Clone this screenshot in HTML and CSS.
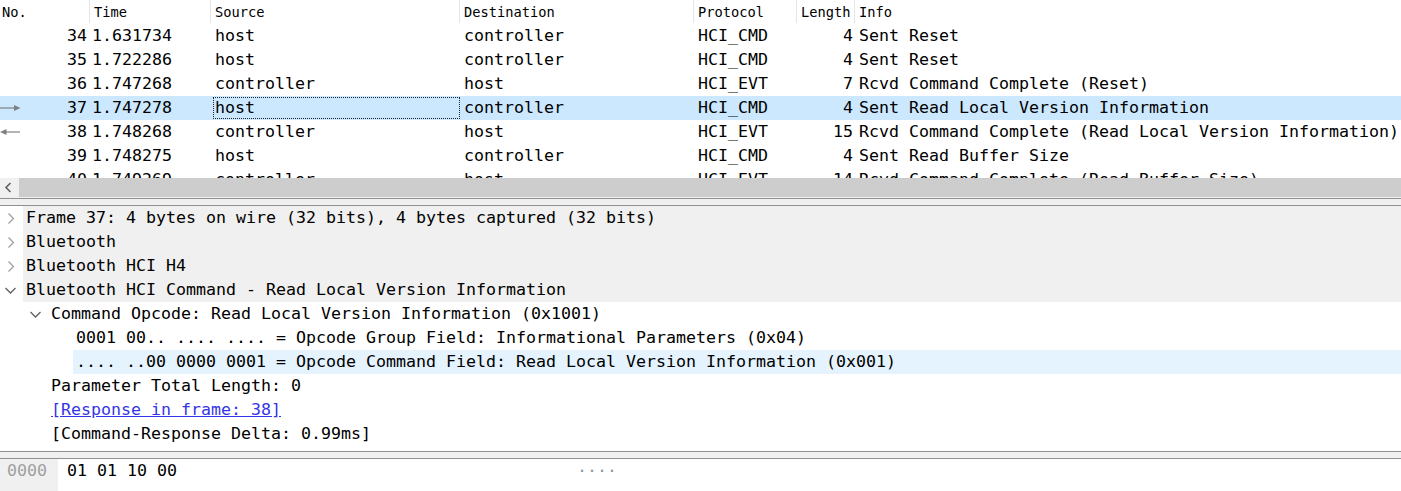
FILE: index.html
```html
<!DOCTYPE html>
<html>
<head>
<meta charset="utf-8">
<link rel="stylesheet" href="styles.css">
</head>
<body>
<div class="app">
  <div class="plist">
    <div class="phead">
      <span class="hcell h-no">No.</span>
      <span class="hcell">Time</span>
      <span class="hcell">Source</span>
      <span class="hcell">Destination</span>
      <span class="hcell">Protocol</span>
      <span class="hcell">Length</span>
      <span class="hcell last">Info</span>
    </div>
    <div class="prow">
      <span class="c-no">34</span><span class="c-time">1.631734</span><span class="c-txt">host</span><span class="c-txt">controller</span><span class="c-txt">HCI_CMD</span><span class="c-len">4</span><span class="c-txt">Sent Reset</span>
    </div>
    <div class="prow">
      <span class="c-no">35</span><span class="c-time">1.722286</span><span class="c-txt">host</span><span class="c-txt">controller</span><span class="c-txt">HCI_CMD</span><span class="c-len">4</span><span class="c-txt">Sent Reset</span>
    </div>
    <div class="prow">
      <span class="c-no">36</span><span class="c-time">1.747268</span><span class="c-txt">controller</span><span class="c-txt">host</span><span class="c-txt">HCI_EVT</span><span class="c-len">7</span><span class="c-txt">Rcvd Command Complete (Reset)</span>
    </div>
    <div class="prow sel">
      <span class="c-no"><svg class="arrow" width="22" height="10" viewBox="0 0 22 10"><path d="M0 5H15" stroke="#808080" stroke-width="1.2"/><path d="M14 2L20.5 5L14 8Z" fill="#808080"/></svg>37</span><span class="c-time">1.747278</span><span class="c-txt focus">host</span><span class="c-txt">controller</span><span class="c-txt">HCI_CMD</span><span class="c-len">4</span><span class="c-txt">Sent Read Local Version Information</span>
    </div>
    <div class="prow">
      <span class="c-no"><svg class="arrow" width="22" height="10" viewBox="0 0 22 10"><path d="M5 5H20" stroke="#808080" stroke-width="1.2"/><path d="M6.5 2L0 5L6.5 8Z" fill="#808080"/></svg>38</span><span class="c-time">1.748268</span><span class="c-txt">controller</span><span class="c-txt">host</span><span class="c-txt">HCI_EVT</span><span class="c-len">15</span><span class="c-txt">Rcvd Command Complete (Read Local Version Information)</span>
    </div>
    <div class="prow">
      <span class="c-no">39</span><span class="c-time">1.748275</span><span class="c-txt">host</span><span class="c-txt">controller</span><span class="c-txt">HCI_CMD</span><span class="c-len">4</span><span class="c-txt">Sent Read Buffer Size</span>
    </div>
    <div class="prow">
      <span class="c-no">40</span><span class="c-time">1.749269</span><span class="c-txt">controller</span><span class="c-txt">host</span><span class="c-txt">HCI_EVT</span><span class="c-len">14</span><span class="c-txt">Rcvd Command Complete (Read Buffer Size)</span>
    </div>
  </div>

  <div class="hscroll">
    <div class="sbtn"><svg width="19" height="19" viewBox="0 0 19 19"><path d="M10.5 5L6 9.5L10.5 14" fill="none" stroke="#606060" stroke-width="1.6"/></svg></div>
    <div class="thumb"></div>
  </div>

  <div class="split"></div>

  <div class="tree">
    <div class="trow top">
      <span class="tw"><svg width="23" height="24" viewBox="0 0 23 24"><path d="M8.5 7.5L13.5 12.5L8.5 17.5" fill="none" stroke="#a0a0a0" stroke-width="1.3"/></svg></span>
      <span class="item">Frame 37: 4 bytes on wire (32 bits), 4 bytes captured (32 bits)</span>
    </div>
    <div class="trow top">
      <span class="tw"><svg width="23" height="24" viewBox="0 0 23 24"><path d="M8.5 7.5L13.5 12.5L8.5 17.5" fill="none" stroke="#a0a0a0" stroke-width="1.3"/></svg></span>
      <span class="item">Bluetooth</span>
    </div>
    <div class="trow top">
      <span class="tw"><svg width="23" height="24" viewBox="0 0 23 24"><path d="M8.5 7.5L13.5 12.5L8.5 17.5" fill="none" stroke="#a0a0a0" stroke-width="1.3"/></svg></span>
      <span class="item">Bluetooth HCI H4</span>
    </div>
    <div class="trow top">
      <span class="tw"><svg width="23" height="24" viewBox="0 0 23 24"><path d="M5.5 10L10.5 15L15.5 10" fill="none" stroke="#606060" stroke-width="1.3"/></svg></span>
      <span class="item">Bluetooth HCI Command - Read Local Version Information</span>
    </div>
    <div class="trow l1">
      <span class="tw"><svg width="23" height="24" viewBox="0 0 23 24"><path d="M5.5 10L10.5 15L15.5 10" fill="none" stroke="#606060" stroke-width="1.3"/></svg></span>
      <span class="item">Command Opcode: Read Local Version Information (0x1001)</span>
    </div>
    <div class="trow l2">
      <span class="tw"></span>
      <span class="item">0001 00.. .... .... = Opcode Group Field: Informational Parameters (0x04)</span>
    </div>
    <div class="trow l2 hl">
      <span class="tw"></span>
      <span class="item">.... ..00 0000 0001 = Opcode Command Field: Read Local Version Information (0x001)</span>
    </div>
    <div class="trow l1">
      <span class="tw"></span>
      <span class="item">Parameter Total Length: 0</span>
    </div>
    <div class="trow l1">
      <span class="tw"></span>
      <span class="item"><span class="link">[Response in frame: 38]</span></span>
    </div>
    <div class="trow l1">
      <span class="tw"></span>
      <span class="item">[Command-Response Delta: 0.99ms]</span>
    </div>
  </div>

  <div class="split"></div>

  <div class="bytes">
    <div class="gutter">0000</div>
    <div class="hex">01 01 10 00</div>
    <div class="ascii">····</div>
  </div>
</div>
</body>
</html>
```

FILE: styles.css
```css
html, body {
  margin: 0;
  padding: 0;
  background: #ffffff;
}
body {
  width: 1401px;
  height: 491px;
  overflow: hidden;
  font-family: "DejaVu Sans Mono", "Liberation Mono", monospace;
  color: #000000;
}
.app {
  display: flex;
  flex-direction: column;
  height: 491px;
}

/* packet list */
.plist {
  flex: none;
  height: 178px;
  overflow: hidden;
}
.phead, .prow {
  display: grid;
  grid-template-columns: 90px 121px 249px 234px 103px 58px 1fr;
}
.phead {
  height: 24px;
  font-size: 13.7px;
  line-height: 24px;
}
.hcell {
  padding-left: 4px;
  height: 23px;
  border-right: 1px solid #e5e5e5;
  white-space: nowrap;
  overflow: hidden;
}
.hcell.h-no { padding-left: 2px; }
.hcell.last { border-right: none; }
.prow {
  height: 24px;
  font-size: 16.62px;
  line-height: 24px;
  white-space: nowrap;
}
.prow > span {
  overflow: hidden;
}
.prow.sel { background: #cce8ff; }
.c-no {
  display: flex;
  align-items: center;
  justify-content: flex-end;
  padding-right: 3px;
}
.c-no .arrow { margin-right: auto; }
.c-time { padding-left: 2px; }
.c-txt { padding-left: 4px; }
.c-len { text-align: right; padding-right: 2px; }
.focus { position: relative; }
.focus::after {
  content: "";
  position: absolute;
  left: 2px;
  right: 0;
  top: 1px;
  bottom: 1px;
  border: 1px dotted #222;
}

/* horizontal scrollbar */
.hscroll {
  flex: none;
  height: 20px;
  display: flex;
  background: #f0f0f0;
}
.sbtn {
  width: 19px;
  height: 19px;
  background: #f0f0f0;
}
.sbtn svg { display: block; }
.thumb {
  flex: 1;
  height: 19px;
  background: #cdcdcd;
}

/* splitter */
.split {
  flex: none;
  height: 6px;
  background: #f0f0f0;
  border-top: 1px solid #919191;
  border-bottom: 1px solid #919191;
}

/* detail tree */
.tree {
  flex: none;
  height: 245px;
  font-size: 16.62px;
  line-height: 24px;
}
.trow {
  display: flex;
  height: 24px;
  white-space: pre;
}
.trow.l1 { padding-left: 25px; }
.trow.l2 { padding-left: 50px; }
.tw {
  flex: none;
  width: 23px;
  height: 24px;
}
.tw svg { display: block; }
.item {
  flex: 1;
  padding-left: 3px;
  overflow: hidden;
}
.top .item { background: #f0f0f0; }
.hl .item { background: #e5f3ff; }
.link {
  color: #3535e6;
  text-decoration: underline;
}

/* bytes pane */
.bytes {
  flex: 1;
  display: flex;
  font-size: 16.62px;
  line-height: 24px;
  min-height: 0;
}
.gutter {
  width: 58px;
  box-sizing: border-box;
  padding-left: 7px;
  background: #f0f0f0;
  color: #a0a0a0;
}
.hex {
  width: 519px;
  padding-left: 9px;
  box-sizing: border-box;
}
.ascii {
  color: #8e99a6;
}
```
